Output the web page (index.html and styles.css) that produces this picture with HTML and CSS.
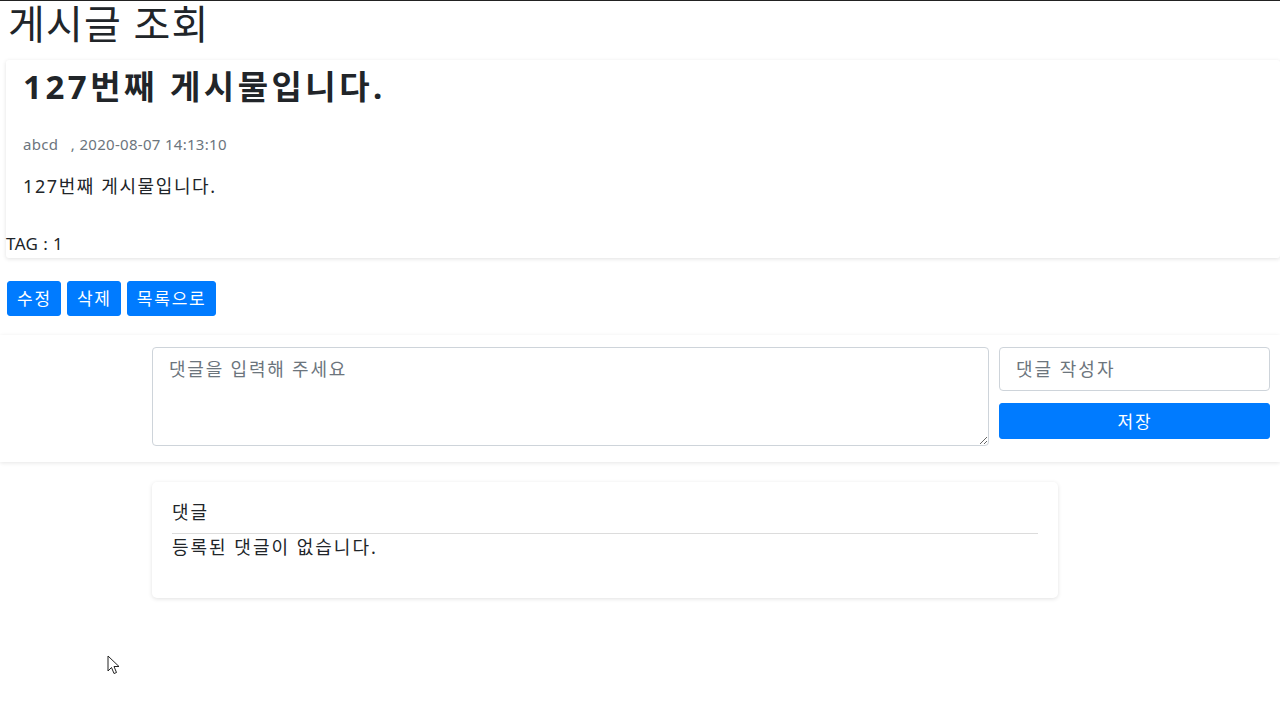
FILE: index.html
```html
<!DOCTYPE html>
<html lang="ko">
<head>
<meta charset="utf-8">
<title>게시글 조회</title>
<link rel="stylesheet" href="styles.css">
</head>
<body>
<div class="topline"></div>
<h1 class="page-title">게시글 조회</h1>

<div class="post-card">
  <div class="post-body">
    <h2 class="post-title">127번째 게시물입니다.</h2>
    <p class="post-meta">abcd &nbsp;&nbsp;, 2020-08-07 14:13:10</p>
    <p class="post-content">127번째 게시물입니다.</p>
  </div>
  <div class="post-tag">TAG : 1</div>
</div>

<div class="actions">
  <button class="btn">수정</button>
  <button class="btn">삭제</button>
  <button class="btn">목록으로</button>
</div>

<div class="comment-form">
  <textarea class="comment-text" placeholder="댓글을 입력해 주세요"></textarea>
  <div class="comment-side">
    <input class="comment-writer" type="text" placeholder="댓글 작성자">
    <button class="btn btn-block">저장</button>
  </div>
</div>

<div class="comment-list">
  <div class="comment-head">댓글</div>
  <div class="comment-empty">등록된 댓글이 없습니다.</div>
</div>

<svg class="cursor" width="14" height="22" viewBox="0 0 14 22">
  <path d="M1 1 L1 16 L4.5 12.5 L7 18.5 L9.5 17.5 L7 11.5 L12 11.5 Z" fill="#fff" stroke="#222" stroke-width="1" stroke-linejoin="round"/>
</svg>
</body>
</html>
```

FILE: styles.css
```css
html, body {
  margin: 0;
  padding: 0;
  background: #fff;
}
body {
  font-family: "Noto Sans", "Noto Sans CJK KR", sans-serif;
  color: #212529;
  position: relative;
  min-height: 720px;
  overflow: hidden;
}
.topline {
  height: 1px;
  background: #222;
}
.page-title {
  margin: 0 0 0 8px;
  font-size: 40px;
  font-weight: 400;
  line-height: 50px;
  margin-top: -2px;
  letter-spacing: 1.2px;
  color: #212529;
}
.post-card {
  margin: 11px 0 0 6px;
  background: #fff;
  box-shadow: 0 1px 4px rgba(0, 0, 0, 0.12);
  border-radius: 3px;
}
.post-body {
  padding: 2px 17px 0;
}
.post-title {
  margin: 0;
  font-size: 33px;
  font-weight: 700;
  line-height: 50px;
  letter-spacing: 3.5px;
}
.post-meta {
  margin: 22px 0 0;
  font-size: 15px;
  line-height: 20px;
  letter-spacing: 0.3px;
  color: #6c757d;
}
.post-content {
  margin: 20px 0 0;
  font-size: 18px;
  line-height: 24px;
  letter-spacing: 1.6px;
}
.post-tag {
  margin-top: 35px;
  font-size: 17px;
  line-height: 22px;
  letter-spacing: 0.4px;
  padding-bottom: 3px;
}
.actions {
  display: flex;
  gap: 6px;
  margin: 23px 0 0 7px;
}
.btn {
  font-family: inherit;
  font-size: 17px;
  letter-spacing: 1.8px;
  color: #fff;
  background: #007bff;
  border: 1px solid #007bff;
  border-radius: 3px;
  padding: 0 8px 0 9px;
  height: 35px;
  line-height: 33px;
  cursor: pointer;
}
.comment-form {
  margin-top: 19px;
  padding: 12px 10px 16px 152px;
  display: grid;
  grid-template-columns: 837px minmax(0, 1fr);
  column-gap: 10px;
  box-shadow: 0 1px 4px rgba(0, 0, 0, 0.1);
}
.comment-text {
  height: 99px;
  box-sizing: border-box;
  border: 1px solid #ced4da;
  border-radius: 4px;
  padding: 8px 16px;
  font-family: inherit;
  font-size: 18px;
  letter-spacing: 1.8px;
  line-height: 26px;
  resize: vertical;
  margin: 0;
}
.comment-text::placeholder,
.comment-writer::placeholder {
  color: #6c757d;
}
.comment-side {
  display: flex;
  flex-direction: column;
  gap: 12px;
  min-width: 0;
}
.comment-writer {
  width: 100%;
  min-width: 0;
  height: 44px;
  box-sizing: border-box;
  border: 1px solid #ced4da;
  border-radius: 4px;
  padding: 0 16px;
  font-family: inherit;
  font-size: 18px;
  letter-spacing: 2px;
  margin: 0;
}
.btn-block {
  width: 100%;
  height: 36px;
}
.comment-list {
  margin: 20px 0 0 152px;
  width: 906px;
  box-sizing: border-box;
  padding: 16px 20px 38px;
  border-radius: 5px;
  box-shadow: 0 1px 4px rgba(0, 0, 0, 0.12);
}
.comment-head {
  font-size: 18px;
  line-height: 28px;
  letter-spacing: 2px;
  padding-bottom: 7px;
  border-bottom: 1px solid #dcdcdc;
}
.comment-empty {
  font-size: 18px;
  line-height: 26px;
  letter-spacing: 2px;
}
.cursor {
  position: absolute;
  left: 107px;
  top: 655px;
}
```
